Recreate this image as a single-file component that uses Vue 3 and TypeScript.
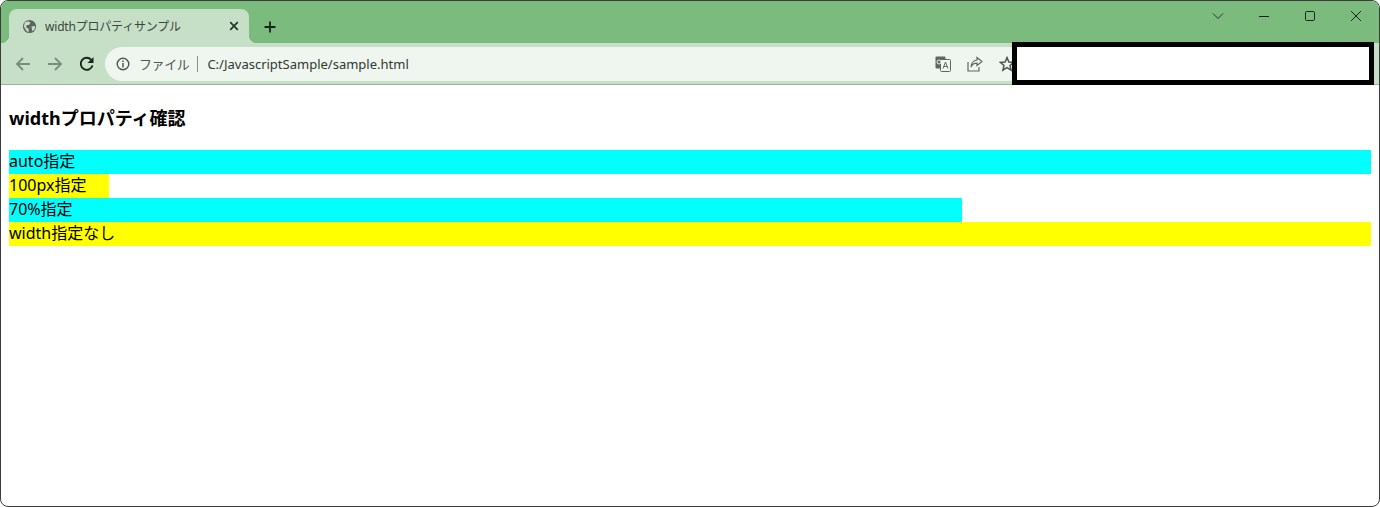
<script setup lang="ts">
interface Bar { label: string; kind: string }
const bars: Bar[] = [
  { label: 'auto指定', kind: 'cyan auto' },
  { label: '100px指定', kind: 'yellow px' },
  { label: '70%指定', kind: 'cyan pct' },
  { label: 'width指定なし', kind: 'yellow' },
]
</script>

<template>
  <div class="window">
    <header class="strip">
      <div class="tab">
        <svg class="globe" width="16" height="16" viewBox="0 0 16 16">
          <circle cx="8" cy="8" r="7" fill="#5b6660" />
          <path d="M3 3.5 L7 2.5 L9 4 L7.5 6.5 L5 6.5 L4.5 9 L7 10.5 L7 14 L5 13 L2 8 Z M10 8 L14 7.5 L13.5 11 L11 13 L10.5 10.5 Z" fill="#c5e0c6" />
        </svg>
        <span class="tab-title">widthプロパティサンプル</span>
        <svg class="tab-close" width="10" height="10" viewBox="0 0 10 10">
          <path d="M1.2 1.2 L8.8 8.8 M8.8 1.2 L1.2 8.8" stroke="#2a332b" stroke-width="1.7" fill="none" />
        </svg>
      </div>
      <svg class="plus" width="12" height="12" viewBox="0 0 12 12">
        <path d="M6 0.5 V11.5 M0.5 6 H11.5" stroke="#1b241c" stroke-width="1.8" fill="none" />
      </svg>
      <div class="caption">
        <svg class="cap chev" width="12" height="12" viewBox="0 0 12 12">
          <path d="M1 3.5 L6 8.5 L11 3.5" stroke="#2a332b" stroke-width="1" fill="none" />
        </svg>
        <svg class="cap min" width="12" height="12" viewBox="0 0 12 12">
          <path d="M1 6.5 H11" stroke="#1c241d" stroke-width="1" fill="none" />
        </svg>
        <svg class="cap max" width="12" height="12" viewBox="0 0 12 12">
          <rect x="1.5" y="1.5" width="9" height="9" rx="1.2" stroke="#1c241d" stroke-width="1" fill="none" />
        </svg>
        <svg class="cap close" width="12" height="12" viewBox="0 0 12 12">
          <path d="M1 1 L11 11 M11 1 L1 11" stroke="#1c241d" stroke-width="1" fill="none" />
        </svg>
      </div>
    </header>

    <nav class="toolbar">
      <svg class="nav" width="16" height="16" viewBox="0 0 16 16">
        <path d="M15 8 H2 M8 2 L2 8 L8 14" stroke="#7b8b7d" stroke-width="1.8" fill="none" />
      </svg>
      <svg class="nav" width="16" height="16" viewBox="0 0 16 16">
        <path d="M1 8 H14 M8 2 L14 8 L8 14" stroke="#7b8b7d" stroke-width="1.8" fill="none" />
      </svg>
      <svg class="nav" width="16" height="16" viewBox="0 0 16 16">
        <path d="M13.5 9.5 A6 6 0 1 1 12.2 3.8" stroke="#1c241d" stroke-width="1.9" fill="none" />
        <path d="M14.5 1 V7 H8.5 Z" fill="#1c241d" />
      </svg>
      <div class="omnibox">
        <svg class="info" width="14" height="14" viewBox="0 0 14 14">
          <circle cx="7" cy="7" r="5.8" stroke="#4d564f" stroke-width="1.4" fill="none" />
          <path d="M7 6 V10.5 M7 3.4 V5" stroke="#4d564f" stroke-width="1.5" fill="none" />
        </svg>
        <span class="scheme">ファイル</span>
        <span class="sep"></span>
        <span class="url">C:/JavascriptSample/sample.html</span>
        <svg class="act translate" width="16" height="16" viewBox="0 0 16 16">
          <rect x="0.5" y="0.5" width="10" height="12" rx="1" fill="#5d6660" />
          <rect x="5.5" y="3.5" width="10" height="12" rx="1" fill="#eff6f0" stroke="#5d6660" />
          <path d="M8 12.5 L10.5 6 L13 12.5 M9 10.5 H12" stroke="#5d6660" stroke-width="1" fill="none" />
          <circle cx="4" cy="6" r="2" stroke="#eff6f0" stroke-width="1" fill="none" />
        </svg>
        <svg class="act share" width="16" height="16" viewBox="0 0 16 16">
          <path d="M1 6 V15 H12 V11" stroke="#5d6660" stroke-width="1.2" fill="none" />
          <path d="M10 1.5 L15 5.5 L10 9.5 V7.2 C7 7.2 5 8.5 4 11 C4 7.5 6.5 4.5 10 4 Z" stroke="#5d6660" stroke-width="1.2" fill="none" />
        </svg>
        <svg class="act star" width="16" height="16" viewBox="0 0 16 16">
          <path d="M8 1.6 L9.9 6 L14.6 6.4 L11 9.5 L12.1 14.2 L8 11.7 L3.9 14.2 L5 9.5 L1.4 6.4 L6.1 6 Z" stroke="#4d564f" stroke-width="1.5" fill="none" />
        </svg>
      </div>
    </nav>

    <div class="redaction"></div>

    <main class="page">
      <h3 class="heading">widthプロパティ確認</h3>
      <div v-for="bar in bars" :key="bar.label" class="bar" :class="bar.kind">{{ bar.label }}</div>
    </main>
  </div>
</template>

<style>
html, body { margin: 0; background: #fff; }
</style>

<style scoped>
.window {
  position: relative;
  width: 1380px;
  height: 507px;
  box-sizing: border-box;
  border: 1px solid #3c3c3c;
  border-radius: 8px;
  overflow: hidden;
  background: #fff;
  font-family: "Noto Sans", "Noto Sans CJK JP", sans-serif;
  color: #000;
}
.strip {
  height: 42px;
  display: flex;
  align-items: flex-end;
  background: #7bbb7e;
}
.tab {
  position: relative;
  width: 240px;
  height: 34px;
  margin-left: 8px;
  box-sizing: border-box;
  padding: 0 10px 0 13px;
  display: flex;
  align-items: center;
  background: #c5e0c6;
  border-radius: 8px 8px 0 0;
}
.tab::before, .tab::after {
  content: "";
  position: absolute;
  bottom: 0;
  width: 8px;
  height: 8px;
}
.tab::before {
  left: -8px;
  background: radial-gradient(circle at 0 0, #7bbb7e 8px, #c5e0c6 8.5px);
}
.tab::after {
  right: -8px;
  background: radial-gradient(circle at 100% 0, #7bbb7e 8px, #c5e0c6 8.5px);
}
.globe { flex: none; width: 15px; height: 15px; }
.tab-title {
  margin-left: 8px;
  flex: 1;
  font-size: 12px;
  letter-spacing: -0.2px;
  color: #3c453e;
  white-space: nowrap;
}
.tab-close { flex: none; }
.plus { flex: none; margin: 0 0 10px 15px; }
.caption {
  margin-left: auto;
  align-self: flex-start;
  display: flex;
  align-items: center;
  height: 30px;
  padding-right: 17px;
}
.cap { flex: none; }
.min { margin-left: 34px; }
.max { margin-left: 34px; }
.close { margin-left: 34px; }
.toolbar {
  height: 42px;
  box-sizing: border-box;
  display: flex;
  align-items: center;
  padding-left: 14px;
  background: #c5e0c6;
  border-bottom: 1px solid #9fb2a1;
}
.nav { flex: none; margin-right: 16px; }
.omnibox {
  flex: none;
  margin-left: -6px;
  width: 920px;
  height: 34px;
  box-sizing: border-box;
  display: flex;
  align-items: center;
  padding-left: 11px;
  border-radius: 17px;
  background: #eff6f0;
  font-size: 13px;
  color: #3c453e;
}
.info { flex: none; }
.scheme { margin-left: 9px; font-size: 13px; letter-spacing: -0.4px; color: #4d564f; }
.sep { width: 1px; height: 16px; margin-left: 8px; background: #8a948c; }
.url { margin-left: 9px; color: #2f3831; white-space: nowrap; flex: 1; }
.act { flex: none; }
.translate { margin-right: 16px; }
.share { margin-right: 16px; }
.star { margin-right: 10px; }
.redaction {
  position: absolute;
  left: 1011px;
  top: 41px;
  width: 362px;
  height: 43px;
  box-sizing: border-box;
  border-style: solid;
  border-color: #000;
  border-width: 5px;
  background: #fff;
}
.page { padding: 0 8px; }
.heading {
  margin: 0;
  padding-top: 21px;
  height: 65px;
  box-sizing: border-box;
  font-size: 18px;
  font-weight: 700;
  line-height: 24px;
}
.bar {
  height: 24px;
  line-height: 23px;
  font-size: 16px;
  white-space: nowrap;
}
.cyan { background: #0ff; }
.yellow { background: #ff0; }
.px { width: 100px; }
.pct { width: 70%; }
</style>
